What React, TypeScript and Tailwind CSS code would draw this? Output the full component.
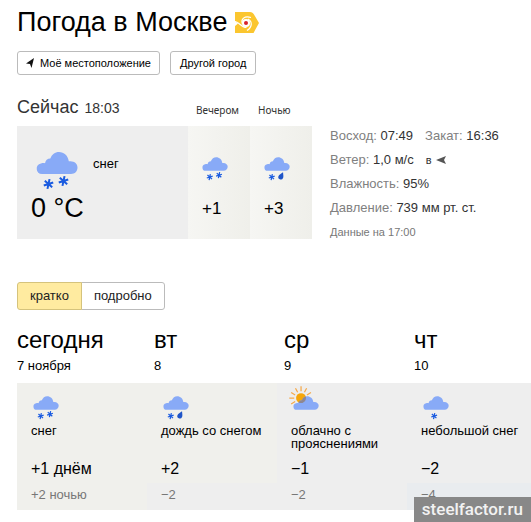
import { useState } from 'react';
import clsx from 'clsx';

type Sky = 'snow' | 'sleet' | 'partly' | 'light-snow';

interface Day {
  name: string;
  date: string;
  sky: Sky;
  condition: string;
  day: string;
  night: string;
}

const days: Day[] = [
  { name: 'сегодня', date: '7 ноября', sky: 'snow', condition: 'снег', day: '+1 днём', night: '+2 ночью' },
  { name: 'вт', date: '8', sky: 'sleet', condition: 'дождь со снегом', day: '+2', night: '−2' },
  { name: 'ср', date: '9', sky: 'partly', condition: 'облачно с прояснениями', day: '−1', night: '−2' },
  { name: 'чт', date: '10', sky: 'light-snow', condition: 'небольшой снег', day: '−2', night: '−4' },
];

const dayBackgrounds = ['bg-[#f0f0ec]', 'bg-[#f0f0ec]', 'bg-[#eeeeee]', 'bg-[#eeeeee]'];
const nightBackgrounds = ['bg-[#f0f0ec]', 'bg-[#eeeeee]', 'bg-[#eeeeee]', 'bg-[#e9ecef]'];

const Flake = ({ x, y }: { x: number; y: number }) => (
  <g transform={`translate(${x} ${y}) rotate(12)`} stroke="#1a5be0" strokeWidth="2">
    <path d="M0-5V5M-4.3-2.5 4.3 2.5M-4.3 2.5 4.3-2.5" />
  </g>
);

const Drop = ({ x, y }: { x: number; y: number }) => (
  <path
    transform={`translate(${x} ${y}) rotate(25)`}
    d="M0-6.5C2-3 4-.5 4 2a4 4 0 0 1-8 0C-4-.5-2-3 0-6.5Z"
    fill="#1f55c8"
  />
);

const SkyIcon = ({ sky, className }: { sky: Sky; className: string }) => (
  <svg viewBox="0 0 42 38" className={clsx('overflow-visible', className)} aria-hidden="true">
    {sky === 'partly' && (
      <g>
        <circle cx="13" cy="3" r="8" fill="#f5a60b" />
        <path
          d="M13-8V-16M18.500-6.500 22-13M22.500-2 29-6M7.500-6.500 4-13M3.500-2-3-6M2 3H-6M3.500 8.500-3 12.500"
          stroke="#f5a94a"
          strokeWidth="2"
        />
      </g>
    )}
    <path
      d="M6 22a5.300 5.300 0 0 1-1-10.500C6.500 11 7.800 11 9 11.200c.6-3 2.300-4.500 5.300-4.600C15.800 2.500 19 0 23 0c5 0 9 3.500 9.800 9.300C38 8.500 41.500 11.500 41.500 15.500c0 3.700-2.700 6.500-6.500 6.500Z"
      fill="#88aaf7"
    />
    {sky === 'partly' && (
      <path d="M7.500 9A8 8 0 0 0 20.700 5c.3-1.300.4-2.700.1-4.500C17.800 1.300 15.500 3.500 14.300 6.600 11.300 6.700 9.500 8.200 9 11Z" fill="#8f8790" />
    )}
    {(sky === 'snow' || sky === 'sleet') && <Flake x={12.5} y={32} />}
    {sky === 'snow' && <Flake x={27.5} y={29} />}
    {sky === 'sleet' && <Drop x={28} y={30} />}
    {sky === 'light-snow' && <Flake x={18} y={32} />}
  </svg>
);

const Logo = () => (
  <svg viewBox="0 0 24 21" className="h-[21px] w-6" aria-hidden="true">
    <path d="M0 0H15C17 0 18 1 19 2.500L24 11 18.500 21H0V14L3 11.500 0 9Z" fill="#fbc62f" />
    <circle cx="11" cy="11" r="4" fill="#fff" />
    <g fill="none" stroke="#fff" strokeWidth="1.200">
      <path d="M0 9.500C4 9.500 5.500 15.500 11.500 15.500" />
      <path d="M7.500 12C5.500 7 9.500 3.500 16 5.500" />
      <path d="M13 7C17.500 9.500 17.500 15 12 18.500" />
    </g>
    <circle cx="11" cy="11" r="2" fill="#d8232a" />
  </svg>
);

const Later = ({ label, sky, temp, className }: { label: string; sky: Sky; temp: string; className?: string }) => (
  <div className="w-[62px]">
    <div className="h-6 pl-2 font-['Noto_Sans',sans-serif] text-[10px] leading-4 text-[#333]">{label}</div>
    <div className={clsx('h-[113px] bg-linear-to-r px-3.5 pt-[31px]', className)}>
      <SkyIcon sky={sky} className="h-6 w-[26px]" />
      <div className="pt-4 text-[17px] leading-6">{temp}</div>
    </div>
  </div>
);

const Fact = ({ label, value }: { label: string; value: string }) => (
  <span>
    <span className="text-[#808080]">{label}:</span> {value}
  </span>
);

export default function App() {
  const [view, setView] = useState('кратко');

  return (
    <main className="bg-white pl-[17px] font-['Liberation_Sans',Arial,sans-serif] text-black">
      <header className="pt-1">
        <div className="flex items-center gap-2">
          <h1 className="text-[27px] leading-9">Погода в Москве</h1>
          <Logo />
        </div>
        <div className="flex gap-2.5 pt-[11px] text-[11px] leading-4">
          <button className="flex h-6 items-center gap-[5px] rounded-[3px] border border-[#bbb] px-2">
            <svg viewBox="0 0 9 10" className="h-2.5 w-[9px]" aria-hidden="true">
              <path d="M8 0 0 5.500 4 6 5.500 10Z" fill="#111" />
            </svg>
            Моё местоположение
          </button>
          <button className="h-6 rounded-[3px] border border-[#bbb] px-[9px]">Другой город</button>
        </div>
      </header>

      <section className="flex pt-[22px]">
        <div className="flex">
          <div className="w-[171px]">
            <div className="flex h-[29px] items-baseline gap-1.5 text-[#333]">
              <h2 className="text-lg leading-5">Сейчас</h2>
              <span className="text-sm leading-5">18:03</span>
            </div>
            <div className="h-[113px] bg-[#eeeeee] px-3.5 pt-[26px]">
              <div className="flex items-start gap-[15px] pl-[5px]">
                <SkyIcon sky="snow" className="h-[38px] w-[42px]" />
                <span className="pt-1 text-[13px] leading-4">снег</span>
              </div>
              <div className="pt-0.5 text-[27px] leading-8">0 °C</div>
            </div>
          </div>
          <div className="flex pt-[5px]">
            <Later label="Вечером" sky="snow" temp="+1" className="from-[#f6f6f3] to-[#efefea]" />
            <Later label="Ночью" sky="sleet" temp="+3" className="from-[#f6f6f3] to-[#efefea]" />
          </div>
        </div>
        <div className="pt-[27px] pl-[18px] text-[13px] leading-6 whitespace-nowrap text-[#333]">
          <div className="flex gap-3">
            <Fact label="Восход" value="07:49" />
            <Fact label="Закат" value="16:36" />
          </div>
          <div className="flex items-center">
            <Fact label="Ветер" value="1,0 м/с" />
            <span className="pl-3 text-[11px]">в</span>
            <svg viewBox="0 0 10 8" className="ml-1 h-2 w-2.5" aria-hidden="true">
              <path d="M0 4 10 0 8 4 10 8Z" fill="#555" />
            </svg>
          </div>
          <Fact label="Влажность" value="95%" />
          <div>
            <Fact label="Давление" value="739 мм рт. ст." />
          </div>
          <div className="text-[11px] text-[#777]">Данные на 17:00</div>
        </div>
      </section>

      <div className="flex pt-[38px] text-[13px] leading-4 text-[#222]">
        {['кратко', 'подробно'].map((name) => (
          <button
            key={name}
            onClick={() => setView(name)}
            aria-pressed={view === name}
            className={clsx(
              'h-7 border px-3 first:rounded-l-[3px] last:-ml-px last:rounded-r-[3px]',
              view === name ? 'z-10 border-[#d5c37c] bg-[#ffeba0]' : 'border-[#bbb] bg-white'
            )}
          >
            {name}
          </button>
        ))}
      </div>

      <table className="mt-3.5 w-full table-fixed text-left">
        <colgroup>
          <col className="w-[130px]" />
          <col className="w-[130px]" />
          <col className="w-[130px]" />
          <col />
        </colgroup>
        <thead>
          <tr>
            {days.map(({ name, date }) => (
              <th key={name} scope="col" className="h-[59px] pl-[7px] align-top font-normal first:pl-0">
                <div className="text-2xl leading-8">{name}</div>
                <div className="pt-0.5 text-[13px] leading-4">{date}</div>
              </th>
            ))}
          </tr>
        </thead>
        <tbody>
          <tr>
            {days.map(({ name, sky, condition }, i) => (
              <td key={name} className={clsx('h-[73px] pt-[13px] pl-3.5 align-top', dayBackgrounds[i])}>
                <SkyIcon sky={sky} className="ml-0.5 h-6 w-[26px]" />
                <div className="pt-1 text-[13px] leading-[13px]">{condition}</div>
              </td>
            ))}
          </tr>
          <tr>
            {days.map(({ name, day }, i) => (
              <td key={name} className={clsx('h-[27px] pb-0.5 pl-3.5 text-base leading-5', dayBackgrounds[i])}>
                {day}
              </td>
            ))}
          </tr>
          <tr>
            {days.map(({ name, night }, i) => (
              <td key={name} className={clsx('h-[27px] pb-1 pl-3.5 text-[13px] leading-5 text-[#777]', nightBackgrounds[i])}>
                {night}
              </td>
            ))}
          </tr>
        </tbody>
      </table>

      <div className="fixed right-0 bottom-0 bg-[#888888] px-2 py-px font-[Roboto,sans-serif] text-[17px] leading-[23px] font-medium text-[#f2f2f2]">
        steelfactor.ru
      </div>
    </main>
  );
}
